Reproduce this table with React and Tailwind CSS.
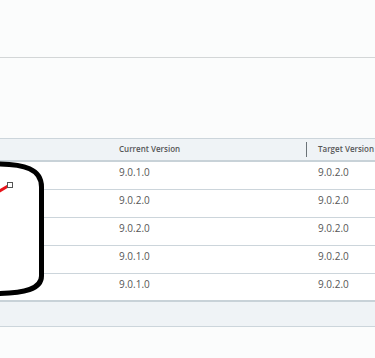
import React from "react";

const rows = [
  ["9.0.1.0", "9.0.2.0"],
  ["9.0.2.0", "9.0.2.0"],
  ["9.0.2.0", "9.0.2.0"],
  ["9.0.1.0", "9.0.2.0"],
  ["9.0.1.0", "9.0.2.0"],
];

export default function App() {
  return (
    <div
      className="relative w-[375px] h-[358px] overflow-hidden bg-[#fbfcfc] text-[#565656]"
      style={{ fontFamily: '"Open Sans", "Liberation Sans", sans-serif' }}
    >
      <div className="h-[58px] border-b border-[#d3d6d7]" />
      <div className="h-[80px]" />
      <div className="border-t border-[#ccd5db]">
        <div className="flex h-[23px] items-center pb-[2px] bg-[#eff3f6] border-b-2 border-[#c8d2d8] text-[8px] font-semibold">
          <div className="w-[119px]" />
          <div className="flex-1">Current Version</div>
          <div className="w-px h-[15px] bg-[#6b7378] mr-[11px] mt-[2px]" />
          <div className="w-[57px] whitespace-nowrap">Target Version</div>
        </div>
        {rows.map((r, i) => (
          <div
            key={i}
            className={`flex h-[28px] items-start pt-[3px] bg-white text-[10px] ${
              i === rows.length - 1 ? "border-b-2 border-[#c8d2d8]" : "border-b border-[#ccd5db]"
            }`}
          >
            <div className="w-[119px]" />
            <div className="flex-1">{r[0]}</div>
            <div className="w-[57px]">{r[1]}</div>
          </div>
        ))}
        <div className="h-[25px] bg-[#eff3f6] border-b border-[#ccd5db]" />
      </div>

      <svg
        className="absolute left-0 top-0 pointer-events-none"
        width="375"
        height="358"
        viewBox="0 0 375 358"
      >
        <path
          d="M -5 164 C 25 164 41.5 169 41.5 187 V 276 C 41.5 289 25 293.5 -5 293.5"
          fill="#ffffff"
          stroke="#000000"
          strokeWidth="5"
        />
        <line x1="-2" y1="192" x2="8" y2="186" stroke="#e8141b" strokeWidth="3" />
        <rect x="7.5" y="182.5" width="5" height="5" fill="#ffffff" stroke="#555555" strokeWidth="1" />
      </svg>
    </div>
  );
}
